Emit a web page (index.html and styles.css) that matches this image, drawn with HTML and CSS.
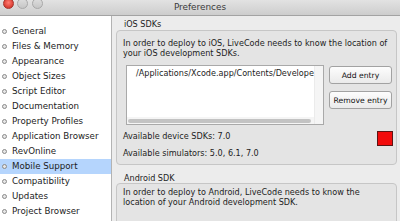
FILE: index.html
```html
<!DOCTYPE html>
<html>
<head>
<meta charset="utf-8">
<title>Preferences</title>
<link rel="stylesheet" href="styles.css">
</head>
<body>
<div class="window">
  <div class="titlebar">
    <div class="lights">
      <span class="light red"></span>
      <span class="light off"></span>
      <span class="light off"></span>
    </div>
    <div class="title">Preferences</div>
    <div></div>
  </div>
  <div class="main">
    <ul class="sidebar">
      <li class="nav-item"><span class="bullet"></span>General</li>
      <li class="nav-item"><span class="bullet"></span>Files &amp; Memory</li>
      <li class="nav-item"><span class="bullet"></span>Appearance</li>
      <li class="nav-item"><span class="bullet"></span>Object Sizes</li>
      <li class="nav-item"><span class="bullet"></span>Script Editor</li>
      <li class="nav-item"><span class="bullet"></span>Documentation</li>
      <li class="nav-item"><span class="bullet"></span>Property Profiles</li>
      <li class="nav-item"><span class="bullet"></span>Application Browser</li>
      <li class="nav-item"><span class="bullet"></span>RevOnline</li>
      <li class="nav-item selected"><span class="bullet"></span>Mobile Support</li>
      <li class="nav-item"><span class="bullet"></span>Compatibility</li>
      <li class="nav-item"><span class="bullet"></span>Updates</li>
      <li class="nav-item"><span class="bullet"></span>Project Browser</li>
    </ul>
    <div class="pane">
      <div class="section-label">iOS SDKs</div>
      <div class="group ios">
        <p class="desc">In order to deploy to iOS, LiveCode needs to know the location of<br>your iOS development SDKs.</p>
        <div class="list-row">
          <div class="listbox">
            <div class="list-content">/Applications/Xcode.app/Contents/Develope</div>
            <div class="vscroll"></div>
            <div class="hscroll"><div class="thumb"></div></div>
          </div>
          <div class="buttons">
            <button class="btn">Add entry</button>
            <button class="btn">Remove entry</button>
          </div>
        </div>
        <div class="avail-row">
          <div class="avail-text">
            <div>Available device SDKs: 7.0</div>
            <div>Available simulators: 5.0, 6.1, 7.0</div>
          </div>
          <div class="status"></div>
        </div>
      </div>
      <div class="section-label android-label">Android SDK</div>
      <div class="group android">
        <p class="desc android-desc">In order to deploy to Android, LiveCode needs to know the<br>location of your Android development SDK.</p>
      </div>
    </div>
  </div>
</div>
</body>
</html>
```

FILE: styles.css
```css
* {
  box-sizing: border-box;
  margin: 0;
  padding: 0;
}

body {
  width: 400px;
  height: 221px;
  overflow: hidden;
  font-family: "DejaVu Sans", "Liberation Sans", sans-serif;
  color: #1c1c1c;
  background: #ececec;
}

.window {
  width: 400px;
  height: 221px;
  display: flex;
  flex-direction: column;
  overflow: hidden;
}

.titlebar {
  height: 16px;
  flex: none;
  display: grid;
  grid-template-columns: 1fr auto 1fr;
  background: linear-gradient(#e2e2e2, #cdcdcd);
  border-bottom: 1px solid #a3a3a3;
}

.lights {
  display: flex;
  align-items: flex-start;
  gap: 3.5px;
  padding-left: 2.5px;
  margin-top: -2px;
}

.light {
  width: 11px;
  height: 11px;
  border-radius: 50%;
}

.light.red {
  background: radial-gradient(circle at 50% 40%, #ff7d73, #e0463b 60%, #b9281f);
  border: 1px solid #a5342c;
}

.light.off {
  background: linear-gradient(#dedede, #c6c6c6);
  border: 1px solid #a8a8a8;
}

.title {
  font-size: 8.9px;
  line-height: 12px;
  padding-top: 1px;
  color: #3a3a3a;
}

.main {
  flex: 1;
  display: flex;
  min-height: 0;
}

.sidebar {
  width: 112px;
  flex: none;
  list-style: none;
  background: #ffffff;
  border-right: 1px solid #b3b3b3;
  padding-top: 8px;
}

.nav-item {
  height: 15px;
  display: flex;
  align-items: center;
  gap: 5px;
  padding-left: 2px;
  font-size: 8.7px;
  line-height: 15px;
  white-space: nowrap;
}

.nav-item.selected {
  background: #b5d5fd;
}

.bullet {
  width: 5px;
  height: 5px;
  flex: none;
  border-radius: 50%;
  border: 1px solid #8a8a8a;
  background: #e6e6e6;
}

.pane {
  flex: 1;
  min-width: 0;
  display: flex;
  flex-direction: column;
  padding: 3px 3px 0 4px;
  overflow: hidden;
}

.section-label {
  font-size: 8.1px;
  line-height: 10px;
  padding-left: 8px;
}

.android-label {
  margin-top: 8px;
}

.group {
  border: 1px solid #c6c6c6;
  border-radius: 4px;
  background: #e4e4e4;
  padding: 7px 3px 6px 6px;
}

.ios {
  margin-top: 1px;
}

.android {
  flex: 1 0 auto;
  padding-top: 4px;
  margin-bottom: -6px;
}

.desc {
  font-size: 8.1px;
  line-height: 10px;
  white-space: nowrap;
}

.android-desc {
  line-height: 9.5px;
}

.list-row {
  display: flex;
  align-items: flex-start;
  gap: 5px;
  margin-top: 7px;
}

.listbox {
  width: 198px;
  height: 60px;
  flex: none;
  margin-left: 3px;
  border: 1px solid #a9a9a9;
  background: #ffffff;
  display: grid;
  grid-template-columns: 1fr 9px;
  grid-template-rows: 1fr 7px;
}

.list-content {
  grid-column: 1;
  grid-row: 1;
  min-width: 0;
  padding: 2px 0 0 9px;
  font-size: 8.1px;
  line-height: 10px;
  white-space: nowrap;
  overflow: hidden;
}

.vscroll {
  grid-column: 2;
  grid-row: 1 / 3;
  background: #f5f5f5;
  border-left: 1px solid #ebebeb;
}

.hscroll {
  grid-column: 1;
  grid-row: 2;
  background: #f5f5f5;
  padding: 1.5px 3px 1.5px 1px;
}

.thumb {
  height: 4px;
  border-radius: 2px;
  background: #c3c3c3;
}

.buttons {
  display: flex;
  flex-direction: column;
  gap: 7px;
  padding-top: 1px;
}

.btn {
  width: 63px;
  height: 18px;
  font-family: inherit;
  font-size: 7.7px;
  color: #111111;
  border: 1px solid #a2a2a2;
  border-radius: 3px;
  background: linear-gradient(#fdfdfd, #eaeaea);
}

.avail-row {
  display: flex;
  justify-content: space-between;
  align-items: flex-start;
  margin-top: 6px;
}

.avail-text {
  display: flex;
  flex-direction: column;
  gap: 7px;
  font-size: 8.1px;
  line-height: 10px;
}

.status {
  width: 16px;
  height: 15px;
  background: #f20b0b;
  border: 1px solid #5c1414;
}
```
